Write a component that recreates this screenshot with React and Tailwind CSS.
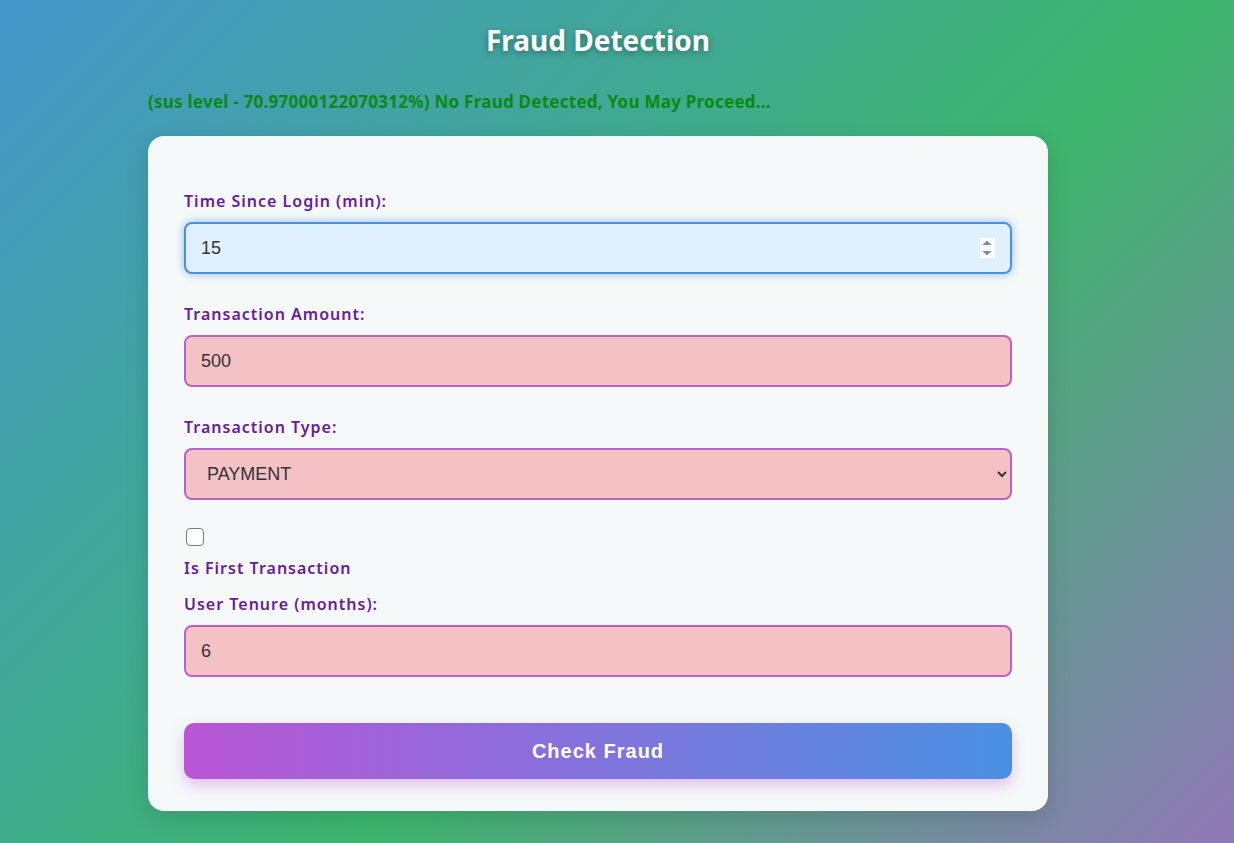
import React, { useState } from 'react';

const labelClass = 'block text-[16px] leading-[22px] font-semibold text-[#6a1b9a] mb-[10px] tracking-[1px]';
const inputClass =
  'block w-full h-[52px] px-[15px] rounded-[8px] border-2 border-[#bb5fcb] bg-[#f4c2c4] text-[18px] text-[#333] outline-none';

const App = () => {
  const [timeSinceLogin, setTimeSinceLogin] = useState('15');
  const [amount, setAmount] = useState('500');
  const [txType, setTxType] = useState('PAYMENT');
  const [isFirst, setIsFirst] = useState(false);
  const [tenure, setTenure] = useState('6');

  const sansFont = { fontFamily: '"Liberation Sans", Arial, sans-serif' };

  return (
    <div
      className="min-h-screen w-full pr-[38px] bg-[linear-gradient(135deg,#4596cb_0%,#3db56e_58%,#9078b6_100%)]"
      style={{ fontFamily: '"Noto Sans", "Open Sans", sans-serif' }}
    >
      <div className="mx-auto w-[900px] pt-[22px] pb-[33px]">
        <h1 className="text-center text-[28px] leading-[36px] font-bold text-white tracking-[0px] [text-shadow:0_2px_6px_rgba(0,0,0,0.35)]">
          Fraud Detection
        </h1>

        <p className="mt-[33px] text-[17px] leading-[22px] font-bold text-[#0a8a12] tracking-[0.25px]">
          (sus level - 70.97000122070312%) No Fraud Detected, You May Proceed...
        </p>

        <form
          className="mt-[23px] rounded-[16px] bg-[#f5f9f9] shadow-[0_6px_24px_rgba(0,0,0,0.12)] px-9 pt-[54px] pb-[32px]"
          onSubmit={(e) => e.preventDefault()}
        >
          <div className="mb-[29px]">
            <label className={labelClass}>Time Since Login (min):</label>
            <input
              type="number"
              autoFocus
              value={timeSinceLogin}
              onChange={(e) => setTimeSinceLogin(e.target.value)}
              className="block w-full h-[52px] px-[15px] rounded-[8px] border-2 border-[#4a90e2] bg-[#dff0ff] text-[18px] text-[#333] outline-none shadow-[0_0_8px_rgba(74,144,226,0.6)]"
              style={sansFont}
            />
          </div>

          <div className="mb-[29px]">
            <label className={labelClass}>Transaction Amount:</label>
            <input
              type="number"
              value={amount}
              onChange={(e) => setAmount(e.target.value)}
              className={inputClass}
              style={sansFont}
            />
          </div>

          <div className="mb-[28px]">
            <label className={labelClass}>Transaction Type:</label>
            <select
              value={txType}
              onChange={(e) => setTxType(e.target.value)}
              className={`${inputClass} px-[17px]`}
              style={sansFont}
            >
              <option value="PAYMENT">PAYMENT</option>
              <option value="TRANSFER">TRANSFER</option>
              <option value="CASH_OUT">CASH_OUT</option>
              <option value="DEBIT">DEBIT</option>
              <option value="CASH_IN">CASH_IN</option>
            </select>
          </div>

          <div className="mb-[14px]">
            <input
              type="checkbox"
              checked={isFirst}
              onChange={(e) => setIsFirst(e.target.checked)}
              className="block ml-[2px] w-[18px] h-[18px] appearance-none rounded-[4px] border-[1.5px] border-[#7a7a7a] bg-white"
            />
            <label className="block mt-[11px] text-[16px] leading-[22px] font-semibold text-[#6a1b9a] tracking-[1px]">
              Is First Transaction
            </label>
          </div>

          <div className="mb-[46px]">
            <label className={labelClass}>User Tenure (months):</label>
            <input
              type="number"
              value={tenure}
              onChange={(e) => setTenure(e.target.value)}
              className={inputClass}
              style={sansFont}
            />
          </div>

          <button
            type="submit"
            className="block w-full h-[56px] rounded-[10px] bg-[linear-gradient(90deg,#b955d6,#4a90e2)] text-white text-[20px] font-bold tracking-[1px] shadow-[0_6px_14px_rgba(185,85,214,0.35)]"
            style={sansFont}
          >
            Check Fraud
          </button>
        </form>
      </div>
    </div>
  );
};

export default App;
